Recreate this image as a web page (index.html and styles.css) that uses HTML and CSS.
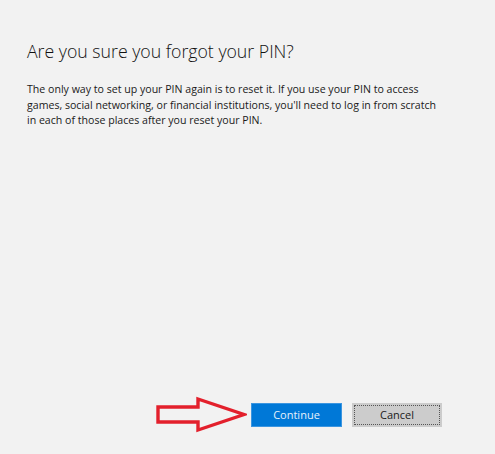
FILE: index.html
```html
<!DOCTYPE html>
<html lang="en">
<head>
<meta charset="utf-8">
<title>Are you sure you forgot your PIN?</title>
<link rel="stylesheet" href="styles.css">
</head>
<body>
<main class="dialog">
  <h1 class="title">Are you sure you forgot your PIN?</h1>
  <p class="message">The only way to set up your PIN again is to reset it. If you use your PIN to access<br>games, social networking, or financial institutions, you'll need to log in from scratch<br>in each of those places after you reset your PIN.</p>
  <div class="actions">
    <svg class="arrow" width="92" height="37" viewBox="0 0 92 37" aria-hidden="true">
      <path d="M3 11 H43 V3 L89 18.5 L43 34 V26 H3 Z" fill="none" stroke="#e3202c" stroke-width="3.4" stroke-linejoin="miter" stroke-miterlimit="10"/>
    </svg>
    <button class="btn btn-primary">Continue</button>
    <button class="btn btn-secondary"><span class="focus">Cancel</span></button>
  </div>
</main>
</body>
</html>
```

FILE: styles.css
```css
html, body {
  margin: 0;
  padding: 0;
  background: #f2f2f2;
}

.dialog {
  box-sizing: border-box;
  height: 454px;
  display: flex;
  flex-direction: column;
  padding: 39px 8px 21px 27px;
  font-family: "Open Sans", "Noto Sans", "Liberation Sans", sans-serif;
  color: #1a1a1a;
}

.title {
  margin: 0;
  font-size: 17.7px;
  font-weight: 300;
  line-height: 24px;
  color: #111;
}

.message {
  margin: 19px 0 0;
  font-size: 10.6px;
  line-height: 15.5px;
  white-space: nowrap;
  color: #1a1a1a;
}

.actions {
  margin-top: auto;
  padding-right: 45px;
  display: flex;
  justify-content: flex-end;
  align-items: center;
  gap: 10px;
}

.arrow {
  display: block;
  margin-right: -6px;
}

.btn {
  box-sizing: border-box;
  width: 90px;
  height: 24px;
  padding: 0;
  font-family: inherit;
  font-size: 11px;
  border: none;
  cursor: pointer;
}

.btn-primary {
  width: 91px;
  background: #0078d7;
  color: #e6f1fb;
  border: 1px solid #3b95e0;
}

.btn-secondary {
  background: #cccccc;
  color: #1a1a1a;
  padding: 2px;
}

.focus {
  box-sizing: border-box;
  display: flex;
  align-items: center;
  justify-content: center;
  width: 100%;
  height: 100%;
  border: 1px dotted #555;
}
```
